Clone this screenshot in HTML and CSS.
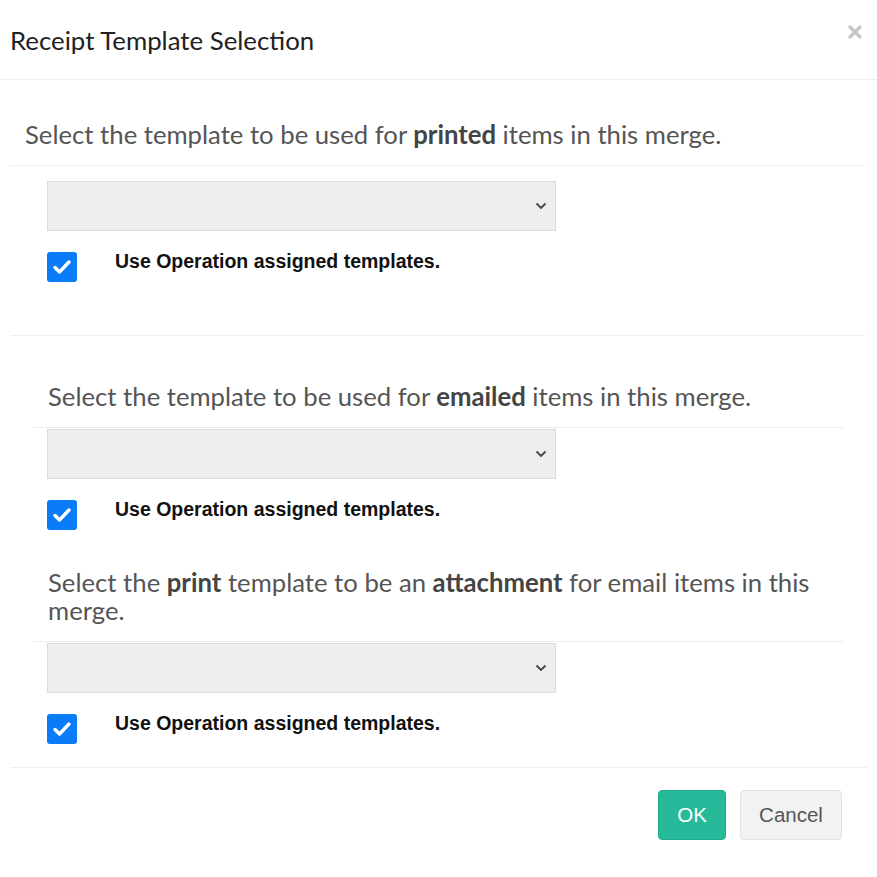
FILE: index.html
```html
<!DOCTYPE html>
<html>
<head>
<meta charset="utf-8">
<link rel="stylesheet" href="styles.css">
</head>
<body>
<div class="modal">
  <div class="modal-header">
    <h4 class="modal-title">Receipt Template Selection</h4>
    <span class="close"><svg width="14" height="14" viewBox="0 0 14 14"><path d="M2 2 L12 12 M12 2 L2 12" stroke="#c6c6c6" stroke-width="3.2" stroke-linecap="round"/></svg></span>
  </div>
  <div class="modal-body">
    <div class="group first">
      <p class="prompt">Select the template to be used for <b>printed</b> items in this merge.</p>
      <div class="rule"></div>
      <div class="field">
        <div class="select"><svg class="chev" width="12" height="8" viewBox="0 0 12 8"><path d="M1.5 1.5 L6 6 L10.5 1.5" fill="none" stroke="#444" stroke-width="1.8"/></svg></div>
        <label class="check"><span class="box"><svg width="20" height="16" viewBox="0 0 20 16"><path d="M3 8.5 L7.5 13 L17 3" fill="none" stroke="#fff" stroke-width="3.4" stroke-linecap="round" stroke-linejoin="round"/></svg></span><span class="label">Use Operation assigned templates.</span></label>
      </div>
    </div>
    <div class="divider"></div>
    <div class="group">
      <p class="prompt">Select the template to be used for <b>emailed</b> items in this merge.</p>
      <div class="rule"></div>
      <div class="field">
        <div class="select"><svg class="chev" width="12" height="8" viewBox="0 0 12 8"><path d="M1.5 1.5 L6 6 L10.5 1.5" fill="none" stroke="#444" stroke-width="1.8"/></svg></div>
        <label class="check"><span class="box"><svg width="20" height="16" viewBox="0 0 20 16"><path d="M3 8.5 L7.5 13 L17 3" fill="none" stroke="#fff" stroke-width="3.4" stroke-linecap="round" stroke-linejoin="round"/></svg></span><span class="label">Use Operation assigned templates.</span></label>
      </div>
    </div>
    <div class="group">
      <p class="prompt">Select the <b>print</b> template to be an <b>attachment</b> for email items in this merge.</p>
      <div class="rule"></div>
      <div class="field">
        <div class="select"><svg class="chev" width="12" height="8" viewBox="0 0 12 8"><path d="M1.5 1.5 L6 6 L10.5 1.5" fill="none" stroke="#444" stroke-width="1.8"/></svg></div>
        <label class="check"><span class="box"><svg width="20" height="16" viewBox="0 0 20 16"><path d="M3 8.5 L7.5 13 L17 3" fill="none" stroke="#fff" stroke-width="3.4" stroke-linecap="round" stroke-linejoin="round"/></svg></span><span class="label">Use Operation assigned templates.</span></label>
      </div>
    </div>
  </div>
  <div class="modal-footer">
    <button class="btn ok">OK</button>
    <button class="btn cancel">Cancel</button>
  </div>
</div>
</body>
</html>
```
FILE: styles.css
```css
html, body { margin: 0; padding: 0; background: #fff; }
body { font-family: "Lato", "Noto Sans", sans-serif; color: #333; }

.modal { width: 877px; }

.modal-header {
  height: 80px;
  border-bottom: 1px solid #eeeeee;
  display: flex;
  align-items: flex-start;
  justify-content: space-between;
  padding: 0 15px 0 10px;
  box-sizing: border-box;
}
.modal-title {
  margin: 25px 0 0;
  font-size: 25.8px;
  font-weight: 400;
  color: #222;
  line-height: 30px;
}
.close {
  margin-top: 25px;
  display: block;
}
.close svg { display: block; }

.modal-body { padding: 0 10px; }

.prompt {
  margin: 0;
  font-size: 25.7px;
  line-height: 28px;
  color: #555;
  padding-left: 38px;
  padding-right: 20px;
}
.prompt b { color: #444; font-weight: 700; }

.group.first { padding-top: 40px; }
.group.first .prompt { padding-left: 15px; }
.group.first .rule { margin: 17px 2px 15px 0; }

.rule { height: 1px; background: #eeeeee; }

.group .rule { margin: 17px 23px 1px 23px; }

.field { padding-left: 37px; }

.select {
  width: 499px;
  height: 48px;
  background: #eeeeee;
  border: 1px solid #dcdcdc;
  display: flex;
  align-items: center;
  justify-content: flex-end;
  padding-right: 8px;
  box-sizing: content-box;
}
.chev { display: block; }

.check {
  display: flex;
  align-items: flex-start;
  margin-top: 21px;
}
.box {
  width: 30px;
  height: 30px;
  border-radius: 3px;
  background: #0a7cf8;
  display: flex;
  align-items: center;
  justify-content: center;
}
.label {
  font-family: "Liberation Sans", Arial, sans-serif;
  font-weight: 700;
  font-size: 19.5px;
  color: #111;
  margin-left: 38px;
  line-height: 20px;
  margin-top: -1px;
}

.first .field { padding-bottom: 53px; }

.divider { height: 1px; background: #eeeeee; margin: 0 2px 0 0; }

.group:not(.first) { padding-top: 46px; }
.group:not(.first) + .group { padding-top: 38px; }

.modal-footer {
  margin: 23px 10px 0;
  border-top: 1px solid #eeeeee;
  padding: 22px 25px 0 0;
  display: flex;
  justify-content: flex-end;
  gap: 14px;
}
.btn {
  height: 50px;
  border-radius: 4px;
  font-family: "Liberation Sans", Arial, sans-serif;
  font-size: 20.5px;
  padding: 0;
}
.ok {
  width: 68px;
  background: #26b99a;
  border: 1px solid #1fae8f;
  color: #fff;
}
.cancel {
  width: 102px;
  background: #f2f2f2;
  border: 1px solid #e2e2e2;
  color: #555;
}
```
